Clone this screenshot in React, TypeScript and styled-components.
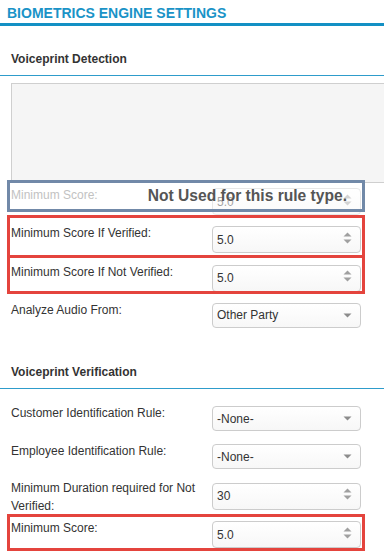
import React from "react";
import styled, { createGlobalStyle } from "styled-components";

const GlobalStyle = createGlobalStyle`
  html, body {
    margin: 0;
    padding: 0;
    background: #ffffff;
  }
  body {
    font-family: "Liberation Sans", Arial, sans-serif;
    color: #333333;
  }
`;

const Page = styled.div`
  width: 384px;
  height: 557px;
  overflow: hidden;
  background: #ffffff;
`;

const Heading = styled.div`
  padding: 5px 7px 2px;
  line-height: 16px;
  font-size: 14px;
  font-weight: 700;
  color: #1a93c7;
  border-bottom: 3px solid #1390c4;
`;

const SectionTitle = styled.div<{ $gap: number }>`
  padding: ${({ $gap }) => $gap}px 11px 8px;
  line-height: 16px;
  font-size: 12px;
  font-weight: 700;
  color: #333333;
  border-bottom: 1px solid #2e9ccb;
`;

const Preview = styled.div`
  margin: 7px 0 0 11px;
  width: calc(100% + 40px);
  height: 98px;
  border: 1px solid #cfcfcf;
  background: #f5f5f5;
`;

const Rows = styled.div<{ $top: number }>`
  padding-top: ${({ $top }) => $top}px;
`;

const Row = styled.div`
  position: relative;
  display: grid;
  grid-template-columns: 201px 149px;
  align-items: start;
  height: 38.3px;
  padding-left: 11px;
`;

const Label = styled.div<{ $muted?: boolean; $wrap?: boolean }>`
  margin-top: ${({ $wrap }) => ($wrap ? -4 : -2)}px;
  padding-right: 6px;
  font-size: 12px;
  line-height: 18px;
  color: ${({ $muted }) => ($muted ? "#c2c2c2" : "#333333")};
`;

const Field = styled.div<{ $tall?: boolean; $muted?: boolean }>`
  box-sizing: border-box;
  height: ${({ $tall }) => ($tall ? 27 : 25)}px;
  display: flex;
  align-items: center;
  justify-content: space-between;
  padding: 0 8px 0 4px;
  border: 1px solid #cccccc;
  border-radius: 4px;
  background: linear-gradient(#ffffff, #f7f7f7);
  font-size: 12px;
  color: #333333;
  opacity: ${({ $muted }) => ($muted ? 0.45 : 1)};
`;

const Mark = styled.div<{ $tone: "red" | "blue"; $top: number; $height: number }>`
  position: absolute;
  left: 7px;
  right: 19px;
  top: ${({ $top }) => $top}px;
  height: ${({ $height }) => $height}px;
  box-sizing: border-box;
  border: 3px solid ${({ $tone }) => ($tone === "red" ? "#e4443d" : "#7189a8")};
  display: flex;
  align-items: center;
  justify-content: flex-end;
  padding-right: 15px;
  pointer-events: none;
`;

const Notice = styled.span`
  font-size: 15.6px;
  font-weight: 700;
  color: #555555;
`;

const Spinner = () => (
  <svg width="9" height="12" viewBox="0 0 9 12" style={{ marginTop: -4 }}>
    <path d="M0.5 4.5 L4.5 0.5 L8.5 4.5 Z" fill="#a0a0a0" />
    <path d="M0.5 7.5 L8.5 7.5 L4.5 11.5 Z" fill="#a0a0a0" />
  </svg>
);

const Caret = () => (
  <svg width="9" height="5" viewBox="0 0 9 5">
    <path d="M0.5 0.5 L8.5 0.5 L4.5 4.5 Z" fill="#8c8c8c" />
  </svg>
);

type Control = { kind: "spin" | "select"; value: string };

const FieldControl = ({ kind, value, muted }: Control & { muted?: boolean }) => (
  <Field $tall={kind === "spin"} $muted={muted}>
    <span>{value}</span>
    {kind === "spin" ? <Spinner /> : <Caret />}
  </Field>
);

const App = () => {
  return (
    <Page>
      <GlobalStyle />
      <Heading>BIOMETRICS ENGINE SETTINGS</Heading>

      <SectionTitle $gap={25}>Voiceprint Detection</SectionTitle>
      <Preview />
      <Rows $top={5}>
        <Row>
          <Label $muted>Minimum Score:</Label>
          <FieldControl kind="spin" value="5.0" muted />
          <Mark $tone="blue" $top={-8} $height={32}>
            <Notice>Not Used for this rule type.</Notice>
          </Mark>
        </Row>
        <Row>
          <Label>Minimum Score If Verified:</Label>
          <FieldControl kind="spin" value="5.0" />
          <Mark $tone="red" $top={-11} $height={43} />
        </Row>
        <Row>
          <Label>Minimum Score If Not Verified:</Label>
          <FieldControl kind="spin" value="5.0" />
          <Mark $tone="red" $top={-10} $height={39} />
        </Row>
        <Row>
          <Label>Analyze Audio From:</Label>
          <FieldControl kind="select" value="Other Party" />
        </Row>
      </Rows>

      <SectionTitle $gap={23}>Voiceprint Verification</SectionTitle>
      <Rows $top={17}>
        <Row>
          <Label>Customer Identification Rule:</Label>
          <FieldControl kind="select" value="-None-" />
        </Row>
        <Row>
          <Label>Employee Identification Rule:</Label>
          <FieldControl kind="select" value="-None-" />
        </Row>
        <Row>
          <Label $wrap>Minimum Duration required for Not Verified:</Label>
          <FieldControl kind="spin" value="30" />
        </Row>
        <Row>
          <Label>Minimum Score:</Label>
          <FieldControl kind="spin" value="5.0" />
          <Mark $tone="red" $top={-7} $height={37} />
        </Row>
      </Rows>
    </Page>
  );
};

export default App;
